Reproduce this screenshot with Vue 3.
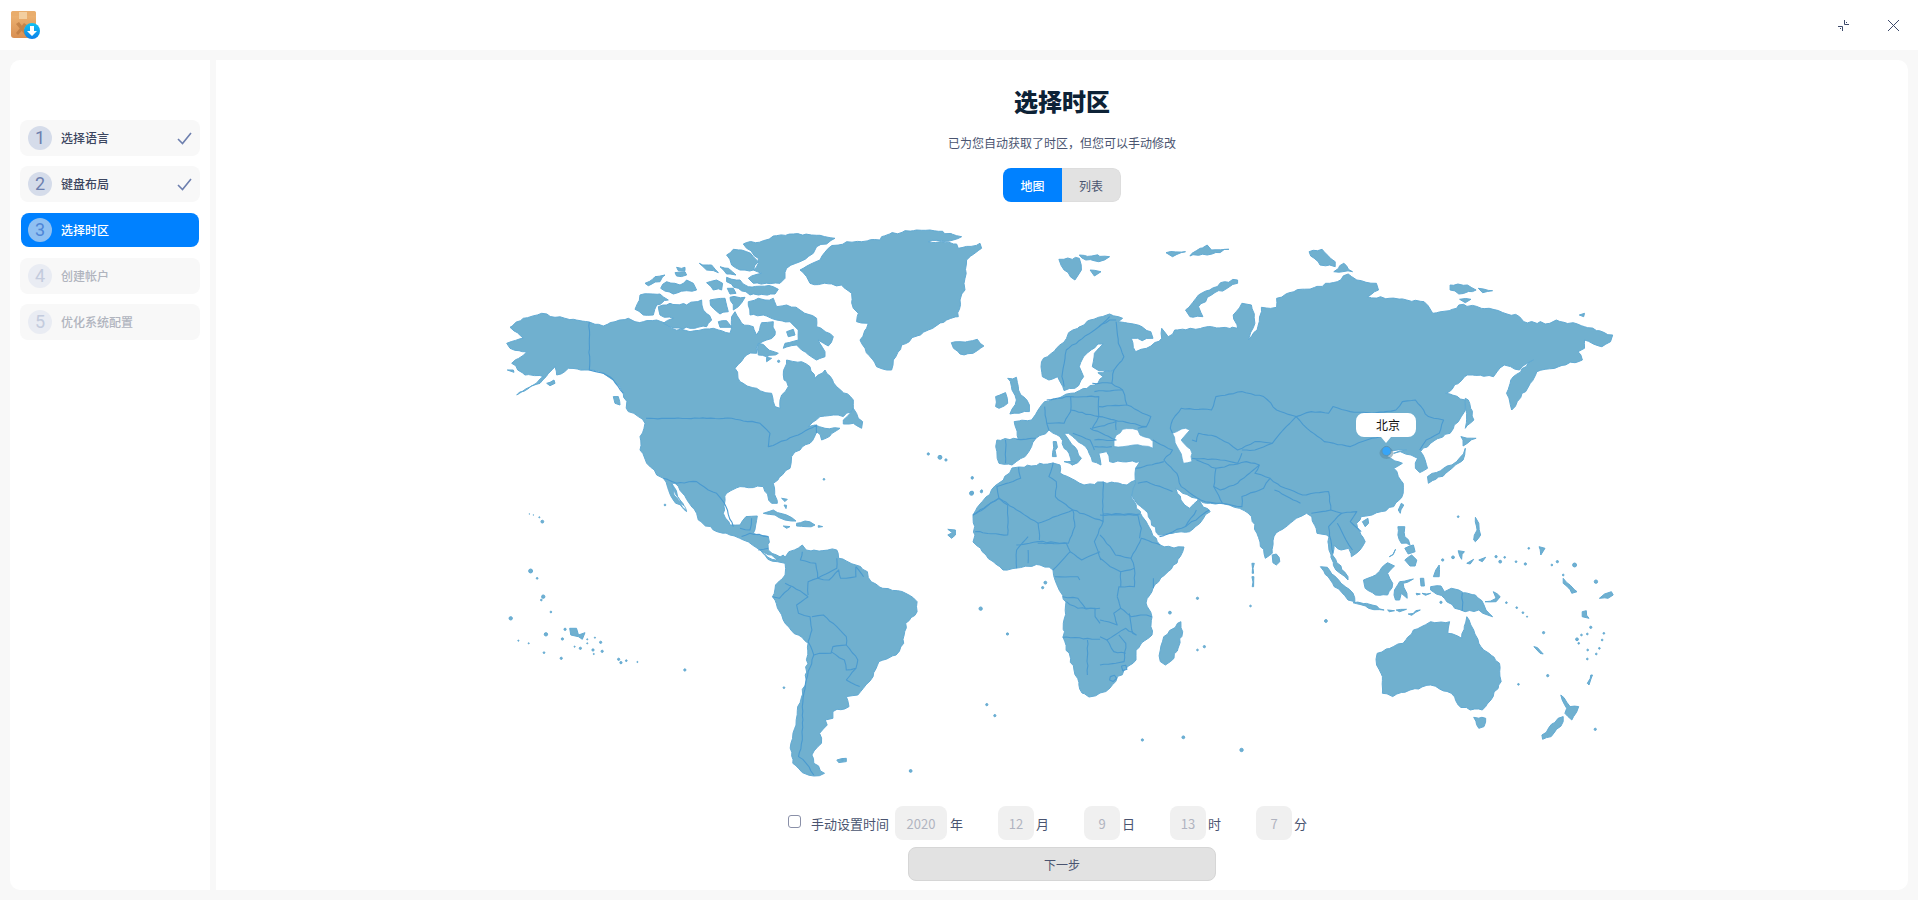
<script setup>
const steps = [
  { n: 1, label: '选择语言', state: 'done' },
  { n: 2, label: '键盘布局', state: 'done' },
  { n: 3, label: '选择时区', state: 'active' },
  { n: 4, label: '创建帐户', state: 'todo' },
  { n: 5, label: '优化系统配置', state: 'todo' },
]

const timeFields = [
  { value: '2020', unit: '年', cls: 'wide' },
  { value: '12', unit: '月', cls: '' },
  { value: '9', unit: '日', cls: '' },
  { value: '13', unit: '时', cls: '' },
  { value: '7', unit: '分', cls: 'last' },
]

// map outlines were traced from crops, so each block keeps its crop's origin and scale
const F = [0, 0, 1, 1]
const NA = [500, 220, 0.3333, 0.3333]
const EU = [960, 220, 0.4337, 0.3333]
const SA = [500, 480, 0.3827, 0.3333]
const OC = [1100, 480, 0.3444, 0.3333]

const pts = (z, s) => s.trim().split(/\s+/).map((p) => {
  const [x, y] = p.split(',').map(Number)
  return [z[0] + x * z[2], z[1] + y * z[3]]
})

// long straight edges get a small wobble so coasts don't look like polygons
let seed = 7
const rnd = () => {
  seed = (seed * 16807) % 2147483647
  return seed / 2147483647 - 0.5
}
const rough = (list, amp) => {
  const out = []
  list.forEach((p, i) => {
    out.push(p)
    const q = list[i + 1]
    if (!q) return
    const dist = Math.hypot(q[0] - p[0], q[1] - p[1])
    const n = Math.floor(dist / 4)
    for (let k = 1; k < n; k++) {
      const t = k / n
      out.push([p[0] + (q[0] - p[0]) * t + rnd() * amp, p[1] + (q[1] - p[1]) * t + rnd() * amp])
    }
  })
  return out
}
const fmt = (list) => list.map(([x, y]) => `${x.toFixed(1)},${y.toFixed(1)}`).join('L')
const poly = (...parts) => {
  const list = parts.flatMap(([z, s]) => pts(z, s))
  list.push(list[0])
  return 'M' + fmt(rough(list, 2.4)) + 'Z'
}
const line = (z, s) => 'M' + fmt(rough(pts(z, s), 1.2))

const land = [
  // north america
  poly([NA, `30,322 70,295 125,280 165,292 220,298 268,306 310,318 345,305 385,295 405,305 430,305 470,300 515,325 570,335 640,325 690,340
    695,290 705,275 725,310 760,320 770,345 785,308 820,305 825,345 800,360 775,372 770,400 740,405 705,445 720,485 770,505 815,520 825,560 840,565
    845,525 865,500 850,465 860,420 905,425 930,440 945,475 975,450 1010,500 1060,540 1060,565 1030,590 1000,585 960,590 925,620 945,615 975,625
    1020,625 965,660 950,635 930,670 900,690 875,710 870,745 820,790 832,850 815,850 790,800 760,803 720,800 680,820 670,880 690,915 720,915 738,890
    772,888 760,940 805,950 805,990 830,1005 860,1020 835,1020 780,990 730,960 690,945 640,930 595,900 590,880 560,838 525,790 515,790 540,840 560,875
    520,840 490,775 470,765 440,730 420,690 420,650 435,610 415,590 385,575 370,520 340,480 310,460 268,450 205,445 170,465 165,440 120,490 50,525 100,495
    130,470 75,465 35,430 80,395 30,385 20,370 70,355 30,322`]),
  poly([NA, '730,72 790,62 820,48 880,42 960,46 1005,55 980,72 950,80 940,100 900,125 860,145 855,175 840,190 760,190 745,175 785,160 760,150 775,130 775,115 740,85']),
  poly([NA, '680,105 700,88 725,90 760,110 775,125 760,150 720,150 695,135']),
  poly([NA, '745,245 775,235 795,240 820,235 830,260 860,255 900,270 950,295 950,320 1000,350 985,378 955,360 975,395 975,410 950,420 905,390 890,375 850,385 855,370 895,360 895,330 870,305 830,300 790,285 750,285']),
  poly([NA, '475,260 510,250 560,255 605,240 610,270 635,300 620,320 570,325 510,320 490,310 520,295 480,285']),
  poly([NA, '420,225 480,222 505,240 470,255 460,285 430,285 405,268']),
  poly([NA, '435,190 465,170 495,165 480,185 445,197']),
  poly([NA, '482,205 500,185 540,195 560,180 580,190 590,210 560,212 520,222']),
  poly([NA, '525,158 555,155 560,165 530,168']),
  poly([NA, '530,142 555,142 555,152 535,152']),
  poly([NA, '598,130 635,135 655,158 620,150']),
  poly([NA, '660,140 685,145 708,165 680,162']),
  poly([NA, '620,188 650,180 668,190 665,210 640,210']),
  poly([NA, '680,172 720,180 745,200 820,200 835,208 825,222 750,225 715,205 680,185']),
  poly([NA, '682,205 700,205 708,220 690,222']),
  poly([NA, '630,240 675,235 685,275 660,282 640,265']),
  poly([NA, '690,232 735,232 715,260 700,270']),
  poly([NA, '655,305 680,302 695,322 660,322']),
  poly([NA, '775,370 835,400 800,410 775,405']),
  poly([NA, '860,335 880,328 885,345 865,350']),
  poly([NA, '800,412 815,415 800,425']),
  poly([NA, '1030,600 1060,565 1075,595 1088,605 1085,625 1060,610 1030,612']),
  poly([NA, '340,530 355,530 360,555 345,550']),
  poly([NA, '140,490 162,480 165,490 150,497']),
  poly([NA, '22,450 40,450 42,457']),
  // greenland
  poly([NA, `900,150 960,120 985,85 1040,65 1085,65 1140,60 1145,50 1215,32 1290,30 1385,50 1360,60 1285,65 1370,72 1375,85 1440,70 1445,85 1400,120 1395,175
    1395,210 1380,240 1375,290 1340,300 1285,330 1205,375 1180,420 1175,450 1160,450 1130,440 1095,385 1080,360 1105,310 1070,305 1075,280 1060,265 1055,220 1025,195 930,190 920,170`]),
  // caribbean
  poly([NA, '790,880 820,870 860,885 888,903 855,900 825,885 800,882']),
  poly([NA, '890,910 915,903 945,915 915,920 890,918']),
  poly([NA, '850,918 870,920 860,925']),
  poly([NA, '955,917 968,920 955,922']),
  poly([NA, '845,835 862,838 855,845']),
  poly([NA, '852,855 860,856 858,866']),
  // south america
  poly([SA, `680,210 700,232 720,240 740,225 745,232 755,215 790,195 800,210 880,210 885,235 930,255 960,275 970,305 1000,325 1060,340 1090,365 1090,395 1060,430
    1055,490 1035,525 990,545 975,590 935,645 905,650 912,680 870,695 870,715 850,720 855,735 835,760 840,790 815,825 820,850 848,880 820,888 790,878 765,850 760,790
    770,745 778,680 800,600 805,490 760,450 725,385 712,350 720,315 745,285 745,250 725,245 700,238`]),
  poly([SA, '880,840 905,835 905,845 885,848']),
  poly([SA, '1170,148 1190,150 1190,165 1180,175 1170,165 1182,158']),
  poly([SA, '182,445 200,445 205,465 222,458 215,478 205,470 185,465']),
  // africa
  poly([F, `1012,468 999,483 986,497 973,515 975,535 973,542 986,555 1003,570 1017,568 1040,565 1053,570 1055,580 1066,602 1063,637 1074,670 1082,693 1089,697 1100,693
    1110,688 1124,670 1136,660 1136,650 1152,635 1152,617 1146,603 1153,588 1177,563 1184,547 1174,548 1160,545 1131,497 1136,480 1127,485 1103,482 1084,485 1060,473 1060,465 1053,463 1019,467`]),
  poly([OC, '175,510 185,470 225,430 235,425 240,455 215,535 190,555 175,545']),
  // eurasia
  poly([EU, `85,660 135,658 125,605 165,600 180,570 195,545 235,530 255,520 310,495 330,470 318,458 355,450 320,452 305,440 310,400 330,372 318,372 285,410 275,440 285,470 265,505
    240,512 225,470 205,480 190,470 188,425 230,375 260,330 300,300 345,282 375,295 365,305 400,312 440,335 445,355 420,362 395,355 405,395 430,385 465,355 465,325 480,350 495,330 580,320
    640,325 630,285 650,250 672,255 680,310 665,360 685,330 695,262 730,262 730,235 770,215 870,185 895,162 915,180 960,190 965,210 940,230 1030,240 1070,245 1090,280 1145,265 1150,255
    1220,265 1290,290 1300,305 1360,310 1375,300 1440,320 1505,345 1500,365 1480,380 1440,360 1440,385 1425,395 1435,420 1380,440 1330,455 1315,490 1285,545 1272,570 1260,520 1270,480
    1305,440 1322,420 1290,450 1255,435 1230,470 1170,465 1120,520 1165,540 1165,570 1130,640 1085,670 1062,695 1078,745 1060,758 1050,745 1055,715 1040,705 1015,695 1000,700 1030,690
    990,690 985,710 1020,730 1000,745 1022,790 1022,820 1000,860 950,885 925,890`],
  [OC, `755,120 745,130 770,185 755,210 730,230 722,205 700,210 680,195 675,225 720,290 720,300 685,270 665,210 665,170 630,160 615,110 600,100 570,115 505,170 500,220 480,235 440,110
    405,85 375,75 335,72 300,68 280,55 240,40 220,25 235,60 260,85 285,60 320,95 290,130 260,155 170,165 130,90 92,48`],
  [EU, `405,790 405,745 415,725 345,725 338,695 320,700 325,735 305,725 295,690 250,640 240,640 270,690 280,715 258,735 255,715 230,650 205,630 175,655 165,680 150,710 120,735 90,730 85,695`]),
  poly([EU, '110,475 130,472 135,510 160,555 160,575 115,582 130,540 120,510']),
  poly([EU, '82,530 105,518 110,550 90,565 82,560']),
  poly([EU, '-20,368 0,365 40,358 55,378 30,400 0,402 -15,385']),
  poly([EU, '228,118 275,115 280,150 265,180 240,150']),
  poly([EU, '275,105 345,110 320,125 290,120']),
  poly([EU, '300,150 325,155 310,168']),
  poly([EU, '475,98 520,95 490,110']),
  poly([EU, '535,100 570,75 580,90 620,88 570,105 530,108']),
  poly([EU, '520,270 550,225 610,185 640,180 640,190 580,225 550,260 560,290 530,290']),
  poly([EU, '805,95 835,88 865,125 865,140 830,135']),
  poly([EU, '862,155 885,130 905,155']),
  poly([EU, '1130,195 1170,195 1190,210 1150,222 1130,210']),
  poly([EU, '1195,205 1228,212 1205,218']),
  poly([EU, '1152,238 1178,238 1165,248']),
  poly([EU, '1428,285 1440,280 1438,290']),
  poly([EU, '1165,535 1172,540 1185,600 1165,625 1168,580']),
  poly([EU, '1155,650 1190,655 1160,678']),
  poly([EU, '1165,685 1160,720 1120,760 1080,790 1078,770 1115,745 1145,725']),
  poly([EU, '215,665 222,665 222,710 213,710']),
  poly([EU, '240,725 268,728 260,735']),
  // asia pacific
  poly([OC, '500,225 512,222 522,245 512,255 502,248']),
  poly([OC, '441,250 448,250 446,280 442,280']),
  poly([OC, '441,290 447,290 446,320 442,320']),
  poly([OC, '640,260 660,262 700,310 735,340 740,365 720,360 680,320']),
  poly([OC, '735,368 790,375 825,390 780,385']),
  poly([OC, '835,390 855,392 840,395']),
  poly([OC, '860,390 890,388 870,395']),
  poly([OC, '895,402 930,390 905,406']),
  poly([OC, '765,300 800,285 835,248 855,258 835,280 850,310 835,345 800,345 770,325']),
  poly([OC, '870,305 910,297 880,310 892,355 875,340 870,360 858,360 855,330']),
  poly([OC, '865,140 885,140 885,170 900,195 875,190 865,165']),
  poly([OC, '885,240 905,225 920,240 915,258 900,258']),
  poly([OC, '885,205 910,195 915,215 895,222']),
  poly([OC, '840,230 858,208 850,225']),
  poly([OC, '875,70 882,75 872,100 866,90']),
  poly([OC, '762,125 778,115 780,130 770,140']),
  poly([OC, '930,295 940,295 942,318 932,318']),
  poly([OC, '975,270 985,255 985,290 968,290']),
  poly([OC, '960,320 990,318 1000,335 1020,325 1055,338 1090,345 1115,375 1140,410 1100,390 1060,395 1030,385 1000,355 960,330']),
  poly([OC, '918,340 930,342 920,345']),
  poly([OC, '935,340 960,340 945,346']),
  poly([OC, '1118,365 1150,355 1142,335 1162,350 1150,365']),
  poly([OC, '1090,112 1100,130 1105,165 1090,185 1085,180 1095,150']),
  poly([OC, '1275,200 1292,205 1280,225']),
  poly([OC, '1040,212 1058,215 1050,238']),
  poly([OC, '1065,250 1085,238 1075,252']),
  poly([OC, '1100,240 1120,232 1110,245']),
  poly([OC, '1345,295 1385,335 1370,340 1345,310']),
  poly([OC, '1450,355 1465,342 1485,335 1490,345 1475,355']),
  poly([OC, '1400,395 1412,392 1420,415 1400,410']),
  poly([OC, '1425,585 1430,585 1420,615 1415,610']),
  poly([OC, '1260,500 1270,503 1287,522 1278,520']),
  // australia and new zealand
  poly([OC, `805,520 880,490 910,450 960,425 1015,425 1010,460 1050,475 1065,410 1085,450 1100,490 1160,550 1165,605 1135,660 1110,690 1075,690 1040,675 1020,640 960,615 900,630 850,650 820,640 820,590 803,555`]),
  poly([OC, '1085,712 1120,715 1115,740 1100,745']),
  poly([OC, '1338,645 1365,680 1390,680 1370,720 1350,700 1355,685']),
  poly([OC, '1345,710 1345,725 1310,770 1285,778 1283,765 1330,715']),
]

const water = [
  poly([EU, '355,660 375,628 410,630 415,645 445,665 445,685 400,675 355,680']),
  poly([EU, '490,640 520,625 530,630 510,660 535,700 535,725 515,730 505,690']),
  poly([NA, '515,792 528,825 560,872 548,862 522,825']),
]

const borders = [
  // north america
  line(NA, '268,306 268,450 310,460 340,480 370,520'),
  line(NA, '438,595 695,595 780,610 810,640 805,680 860,660 905,640 950,615 950,640'),
  line(NA, '490,775 530,790 590,785 625,810 650,820 672,848 700,920'),
  line(NA, '720,925 750,930 755,895'),
  line(NA, '725,950 750,940 805,950'),
  line(NA, '775,990 805,985'),
  // south america
  line(SA, '790,215 785,240 825,250 830,295 880,265 880,235'),
  line(SA, '830,295 860,300 885,270 890,295 905,295 930,290 930,260'),
  line(SA, '950,290 930,260'),
  line(SA, '830,295 805,305 805,345'),
  line(SA, '745,310 765,320 805,350'),
  line(SA, '712,350 730,355 760,320'),
  line(SA, '805,350 775,375 780,400 810,410 815,450 805,485'),
  line(SA, '815,410 845,405 880,440 905,470 905,495'),
  line(SA, '905,495 870,500 865,520 835,520 820,525 805,485'),
  line(SA, '865,515 900,540 905,570 930,565 935,540 905,495'),
  line(SA, '820,525 800,600 790,680 790,780 780,830 800,850 820,885'),
  line(SA, '905,600 940,620'),
  line(SA, '905,600 930,565'),
  // africa
  line(EU, '135,742 140,775 85,800 90,835 30,885'),
  line(EU, '215,728 205,770 222,785 220,830 260,870'),
  line(EU, '90,835 180,910 260,870'),
  line(EU, '330,785 330,882 415,882'),
  line(EU, '330,882 330,905 260,870'),
  line(EU, '330,905 310,965 325,1020'),
  line(EU, '260,870 265,920 250,970 180,965 130,975'),
  line(EU, '30,885 90,835 110,855 110,945 35,935'),
  line(EU, '180,910 183,960'),
  line(SA, '1380,170 1350,210 1350,265'),
  line(SA, '1380,210 1380,250'),
  line(SA, '1405,190 1480,190 1490,215 1445,270'),
  line(SA, '1490,215 1520,240 1568,215'),
  line(SA, '1450,290 1490,290 1510,290 1515,300'),
  line(SA, '1470,350 1510,355 1530,385 1568,385'),
  line(SA, '1480,365 1510,385 1555,385 1555,410 1568,430'),
  line(SA, '1470,472 1568,478'),
  line(SA, '1535,480 1535,585'),
  line(OC, '0,105 110,105 120,145 115,175'),
  line(OC, '0,235 40,265 60,275 100,265 90,235 120,175 175,195'),
  line(OC, '0,165 30,200 45,225 90,235'),
  line(OC, '155,295 155,325'),
  line(OC, '100,265 100,320 55,320 50,350'),
  line(OC, '60,275 60,320'),
  line(OC, '50,350 60,385 90,410 135,405 150,410'),
  line(OC, '0,420 50,435 40,400 60,385'),
  line(OC, '85,400 95,460 105,465 75,445 20,480 0,470'),
  line(OC, '0,555 70,545 75,490 55,465'),
  line(OC, '20,480 40,515 75,520'),
  line(OC, '30,590 42,586 48,595 38,605 28,600 30,590'),
  line(OC, '62,558 75,556 78,568 66,572 62,558'),
  line(OC, '1052,338 1052,393'),
  // europe
  line(EU, '355,450 350,490 375,510 385,555 440,590 430,620 410,625'),
  line(EU, '360,305 365,370 378,410 355,450'),
  line(EU, '345,290 320,320 245,390 235,470 240,500'),
  line(EU, '320,320 345,300 360,300'),
  line(EU, '305,490 350,490'),
  line(EU, '310,515 375,510'),
  line(EU, '320,560 385,555'),
  line(EU, '255,530 320,530 320,590 255,570'),
  line(EU, '200,540 255,530 255,575 240,610 200,610 195,560'),
  line(EU, '200,610 205,630'),
  line(EU, '320,590 430,620'),
  line(EU, '320,590 305,625 360,605 360,630'),
  line(EU, '300,625 360,660 310,660'),
  line(EU, '310,680 350,680'),
  line(EU, '260,640 300,660 310,690'),
  line(EU, '130,658 175,655'),
  line(EU, '105,660 105,730'),
  // asia
  line(EU, '490,600 510,565 580,570 590,530 650,515 700,530 730,570 775,590'),
  line(EU, '490,600 485,625 490,640'),
  line(EU, '445,660 490,690 470,720'),
  line(EU, '775,590 810,575 850,580 860,560 900,575 950,580 1005,570 1020,545 1050,540 1080,590 1115,600 1105,640 1075,660 1060,690'),
  line(EU, '775,590 800,625 840,665 900,680 950,655 1000,640 1010,620'),
  line(EU, '775,590 745,630 720,670 680,690 650,690'),
  line(EU, '535,660 545,665 550,640 590,650 620,670 640,690 680,665 720,670'),
  line(EU, '535,715 600,720 640,730 650,700'),
  line(EU, '470,720 500,760 510,800 555,840 590,850 605,850 585,800 590,745 545,720'),
  line(EU, '590,745 660,725 690,735 640,790 600,810 585,800'),
  line(EU, '690,735 680,760 715,775 700,805 650,830 650,860 605,850'),
  line(EU, '715,775 740,800 790,825 850,815 855,870'),
  line(EU, '725,810 785,850'),
  line(EU, '810,880 855,870 880,880 850,920 855,960 860,1000'),
  line(EU, '880,880 915,875 900,905 925,935'),
  line(EU, '870,910 890,960 905,990'),
  line(EU, '405,745 470,725'),
  line(EU, '410,790 430,785 490,815'),
  line(EU, '460,950 520,920 575,870'),
  line(EU, '545,870 520,920'),
]

const islets = [
  [NA, 88, 882, 1], [NA, 100, 885, 1], [NA, 118, 892, 2], [NA, 127, 905, 5], [NA, 495, 855, 3], [NA, 1285, 702, 4],
  [NA, 1320, 712, 7], [NA, 1338, 720, 4], [NA, 1417, 773, 4], [NA, 972, 778, 3], [NA, 836, 424, 4],
  [SA, 80, 273, 7], [SA, 97, 295, 3], [SA, 113, 350, 6], [SA, 108, 360, 3], [SA, 133, 396, 3], [SA, 28, 415, 6],
  [SA, 120, 463, 6], [SA, 170, 448, 4], [SA, 163, 477, 4], [SA, 228, 478, 2], [SA, 248, 473, 2], [SA, 263, 487, 4],
  [SA, 228, 490, 2], [SA, 210, 505, 4], [SA, 195, 500, 2], [SA, 243, 510, 4], [SA, 245, 522, 2], [SA, 267, 514, 4],
  [SA, 48, 482, 2], [SA, 75, 490, 2], [SA, 115, 518, 3], [SA, 160, 535, 4], [SA, 310, 538, 4], [SA, 316, 548, 4],
  [SA, 330, 542, 3], [SA, 359, 546, 2], [SA, 483, 570, 4], [SA, 742, 623, 3], [SA, 1272, 674, 4], [SA, 1293, 707, 4],
  [SA, 1073, 873, 5], [SA, 1256, 386, 6], [SA, 1425, 308, 5], [SA, 1418, 323, 4], [SA, 1326, 462, 4], [SA, 1232, 40, 7],
  [SA, 1258, 35, 4], [SA, 895, 840, 3],
  [OC, 283, 355, 4], [OC, 203, 398, 5], [OC, 283, 510, 3], [OC, 303, 500, 4], [OC, 123, 780, 4], [OC, 242, 772, 5],
  [OC, 411, 810, 6], [OC, 656, 423, 5], [OC, 437, 378, 3], [OC, 1040, 110, 3], [OC, 1245, 205, 3], [OC, 995, 240, 4],
  [OC, 1025, 232, 5], [OC, 1150, 230, 4], [OC, 1175, 232, 3], [OC, 1162, 245, 5], [OC, 1208, 245, 3], [OC, 1235, 252, 4],
  [OC, 1312, 255, 3], [OC, 1328, 245, 4], [OC, 1378, 255, 7], [OC, 1345, 285, 3], [OC, 1440, 305, 6], [OC, 1425, 442, 4],
  [OC, 1463, 460, 3], [OC, 1458, 480, 3], [OC, 1385, 478, 5], [OC, 1398, 465, 3], [OC, 1415, 462, 3], [OC, 1390, 490, 3],
  [OC, 1416, 510, 3], [OC, 1450, 505, 3], [OC, 1441, 522, 3], [OC, 1415, 537, 3], [OC, 1300, 587, 4], [OC, 1215, 613, 3],
  [OC, 1438, 748, 4], [OC, 1180, 368, 3], [OC, 1210, 383, 3], [OC, 1228, 398, 3], [OC, 1240, 410, 2], [OC, 1288, 458, 4],
  [OC, 990, 367, 4], [EU, 28, 775, 3], [EU, 28, 818, 5], [EU, 50, 812, 3],
].map(([z, x, y, r]) => ({ cx: z[0] + x * z[2], cy: z[1] + y * z[3], r: r * 0.28 }))
</script>

<template>
  <div class="installer">
    <header class="titlebar">
      <svg class="logo" width="30" height="34" viewBox="0 0 30 34">
        <defs>
          <linearGradient id="boxFill" x1="0" y1="0" x2="0" y2="1">
            <stop offset="0" stop-color="#efb877" />
            <stop offset="1" stop-color="#d98f52" />
          </linearGradient>
          <linearGradient id="badgeFill" x1="0" y1="0" x2="0" y2="1">
            <stop offset="0" stop-color="#12c4f2" />
            <stop offset="1" stop-color="#0a7fea" />
          </linearGradient>
        </defs>
        <rect x="1" y="1" width="25" height="27" rx="3" fill="url(#boxFill)" />
        <rect x="1" y="1" width="25" height="5" rx="2" fill="#e9ad6c" />
        <rect x="9" y="2" width="8" height="7" fill="#f3cfa0" />
        <path d="M6 14l3-2 9 12-2 2zM14 13l3 2-9 10-2-2z" fill="#b9773f" opacity=".7" />
        <circle cx="22" cy="21" r="8" fill="url(#badgeFill)" />
        <path d="M20 16h4v5h3l-5 5-5-5h3z" fill="#fff" />
      </svg>
      <div class="window-btns">
        <svg width="12" height="13" viewBox="0 0 12 13" fill="none" stroke="#3d4a6b">
          <path d="M6.5 1V5.5H11M0 7.5H4.5V12" />
          <path d="M8 3h1v1H8zM2 9h1v1H2z" fill="#3d4a6b" stroke="none" />
        </svg>
        <svg width="13" height="13" viewBox="0 0 13 13" fill="none" stroke="#3d4a6b">
          <path d="M1 1l11 11M12 1L1 12" />
        </svg>
      </div>
    </header>

    <div class="content">
      <aside class="sidebar">
        <div v-for="step in steps" :key="step.n" class="step" :class="step.state">
          <span class="num">{{ step.n }}</span>
          <span class="step-label">{{ step.label }}</span>
          <svg v-if="step.state === 'done'" class="check" width="15" height="13" viewBox="0 0 15 13" fill="none">
            <path d="M1 7l4.5 4.5L14 1" stroke="#6d7fae" stroke-width="1.6" />
          </svg>
        </div>
      </aside>

      <main class="panel">
        <h1>选择时区</h1>
        <p class="hint">已为您自动获取了时区，但您可以手动修改</p>
        <div class="tabs">
          <button class="tab on">地图</button>
          <button class="tab">列表</button>
        </div>

        <svg class="map" width="1130" height="590" viewBox="497 210 1130 590">
          <g class="lands">
            <path v-for="(d, i) in land" :key="'l' + i" :d="d" />
            <circle v-for="(c, i) in islets" :key="'c' + i" :cx="c.cx" :cy="c.cy" :r="c.r" />
          </g>
          <path v-for="(d, i) in water" :key="'w' + i" class="water" :d="d" />
          <path v-for="(d, i) in borders" :key="'b' + i" class="border" :d="d" />
          <ellipse cx="1386.5" cy="453" rx="7" ry="6" fill="#5b8aa3" opacity=".55" />
          <circle cx="1386.5" cy="451" r="4.6" fill="#38a5f8" stroke="#5f93b0" />
          <path class="bubble" d="M1364 413h44a8 8 0 0 1 8 8v8a8 8 0 0 1-8 8h-17l-5 6-5-6h-17a8 8 0 0 1-8-8v-8a8 8 0 0 1 8-8z" />
          <text class="bubble-text" x="1388" y="430">北京</text>
        </svg>

        <div class="manual-row">
          <input class="tick" type="checkbox" />
          <span class="manual-label">手动设置时间</span>
          <div v-for="f in timeFields" :key="f.unit" class="field" :class="f.cls">
            <input class="time-input" type="text" :value="f.value" disabled />
            <span class="unit">{{ f.unit }}</span>
          </div>
        </div>
        <button class="next">下一步</button>
      </main>
    </div>
  </div>
</template>

<style>
html, body {
  margin: 0;
  background: #f8f8f8;
}
</style>

<style scoped>
.installer {
  width: 1918px;
  height: 900px;
  display: flex;
  flex-direction: column;
  background: #f8f8f8;
  font-family: "Noto Sans CJK SC", "Noto Sans", sans-serif;
  overflow: hidden;
}

.titlebar {
  height: 50px;
  background: #fff;
  display: flex;
  align-items: flex-start;
  justify-content: space-between;
}

.logo {
  margin: 10px 0 0 10px;
}

.window-btns {
  display: flex;
  align-items: flex-start;
  gap: 37px;
  margin: 19px 18px 0 0;
}

.content {
  display: flex;
  gap: 6px;
  padding: 10px;
  height: 850px;
  box-sizing: border-box;
}

.sidebar {
  width: 200px;
  background: #fff;
  border-radius: 10px 0 0 10px;
  padding: 60px 10px 0;
  box-sizing: border-box;
}

.step {
  height: 36px;
  margin-bottom: 10px;
  background: #f8f8f8;
  border-radius: 8px;
  display: flex;
  align-items: center;
  padding: 0 8px;
  font-size: 12px;
  font-weight: 500;
  color: #3c4660;
}

.step .num {
  width: 24px;
  height: 24px;
  border-radius: 50%;
  background: #d5dcea;
  color: #6d7fae;
  font-family: Roboto, sans-serif;
  font-size: 18px;
  font-weight: 400;
  text-align: center;
  line-height: 24px;
  margin-right: 9px;
}

.step-label {
  flex: 1;
  padding-bottom: 1px;
}

.step.active {
  height: 34px;
  margin: 11px 1px;
  padding: 0 7px;
  background: #0081ff;
  color: #fff;
}

.step.active .num {
  background: #8fc0f2;
  color: #4f86d6;
}

.step.todo {
  color: #b0b4be;
}

.step.todo .num {
  background: #e9ecf3;
  color: #c3cbdd;
}

.panel {
  width: 1692px;
  background: #fff;
  border-radius: 0 10px 10px 0;
  display: flex;
  flex-direction: column;
  align-items: center;
}

h1 {
  margin: 24px 0 0;
  font-size: 24px;
  line-height: 34px;
  font-weight: 900;
  color: #0d2236;
}

.hint {
  margin: 16px 0 0;
  font-size: 12px;
  line-height: 18px;
  color: #4a5470;
}

.tabs {
  margin-top: 16px;
  display: flex;
  height: 34px;
  border-radius: 8px;
  overflow: hidden;
}

.tab {
  width: 59px;
  border: 1px solid #ddd;
  border-left: 0;
  border-radius: 0 8px 8px 0;
  padding: 0;
  background: #e2e2e2;
  color: #4a5470;
  font: inherit;
  font-size: 12px;
}

.tab.on {
  border: 0;
  border-radius: 0;
  background: #0081ff;
  color: #fff;
  font-weight: 500;
}

.map {
  display: block;
  margin-top: 8px;
}

.lands path,
.lands circle {
  fill: #70b0cf;
  stroke: #62aad3;
  stroke-width: 1;
  stroke-linejoin: round;
}

.water {
  fill: #fff;
  stroke: #62aad3;
  stroke-width: 0.8;
  stroke-linejoin: round;
}

.border {
  fill: none;
  stroke: #4a9ad0;
  stroke-width: 1.1;
  stroke-linejoin: round;
}

.bubble {
  fill: #fff;
}

.bubble-text {
  font-size: 12px;
  fill: #111;
  text-anchor: middle;
}

.manual-row {
  margin-top: 6px;
  height: 34px;
  display: flex;
  align-items: center;
  color: #4a5470;
  font-size: 13px;
}

.tick {
  appearance: none;
  width: 13px;
  height: 13px;
  margin: -4px 10px 0 0;
  border: 1.5px solid #8a90a8;
  border-radius: 3px;
  box-sizing: border-box;
  background: #fff;
}

.manual-label {
  width: 84px;
  white-space: nowrap;
}

.field {
  width: 86px;
  display: flex;
  align-items: center;
}

.field.wide {
  width: 103px;
}

.field.last {
  width: 80px;
}

.time-input {
  width: 36px;
  height: 34px;
  box-sizing: border-box;
  border: 0;
  border-radius: 8px;
  background: #f0f0f0;
  color: #b0b4c0;
  font: inherit;
  font-size: 13px;
  text-align: center;
  padding: 0;
  margin-right: 2px;
}

.field.wide .time-input {
  width: 52px;
  margin-right: 3px;
}

.next {
  margin-top: 7px;
  width: 308px;
  height: 34px;
  border: 1px solid #d6d6d6;
  border-radius: 8px;
  background: #e2e2e2;
  color: #4a5470;
  font: inherit;
  font-size: 12px;
}
</style>
